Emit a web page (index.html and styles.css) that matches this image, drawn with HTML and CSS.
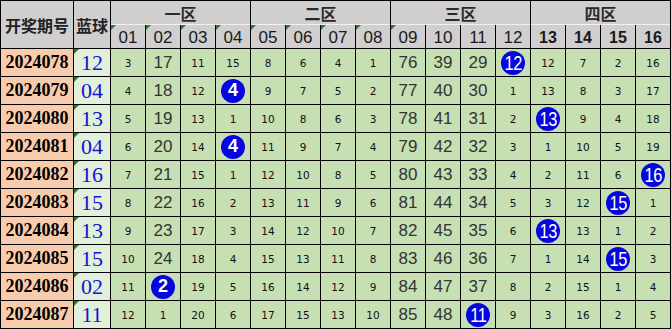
FILE: index.html
```html
<!DOCTYPE html>
<html>
<head>
<meta charset="utf-8">
<link rel="stylesheet" href="styles.css">
</head>
<body>
<div class="t">
  <div class="h hq">开奖期号</div>
  <div class="h hb">蓝球</div>
  <div class="h z">一区</div>
  <div class="h z">二区</div>
  <div class="h z">三区</div>
  <div class="h z">四区</div>
  <div class="h hn tri">01</div><div class="h hn tri">02</div><div class="h hn tri">03</div><div class="h hn tri">04</div>
  <div class="h hn tri">05</div><div class="h hn tri">06</div><div class="h hn tri">07</div><div class="h hn tri">08</div>
  <div class="h hn tri">09</div><div class="h hn">10</div><div class="h hn">11</div><div class="h hn">12</div>
  <div class="h hn hk">13</div><div class="h hn hk">14</div><div class="h hn hk">15</div><div class="h hn hk">16</div>

  <div class="p">2024078</div><div class="b tri">12</div>
  <div class="n">3</div><div class="n L">17</div><div class="n">11</div><div class="n">15</div><div class="n">8</div><div class="n">6</div><div class="n">4</div><div class="n">1</div><div class="n L">76</div><div class="n L">39</div><div class="n L">29</div><div class="n"><span class="ball"><span class="bt">12</span></span></div><div class="n">12</div><div class="n">7</div><div class="n">2</div><div class="n">16</div>

  <div class="p">2024079</div><div class="b tri">04</div>
  <div class="n">4</div><div class="n L">18</div><div class="n">12</div><div class="n"><span class="ball one">4</span></div><div class="n">9</div><div class="n">7</div><div class="n">5</div><div class="n">2</div><div class="n L">77</div><div class="n L">40</div><div class="n L">30</div><div class="n">1</div><div class="n">13</div><div class="n">8</div><div class="n">3</div><div class="n">17</div>

  <div class="p">2024080</div><div class="b tri">13</div>
  <div class="n">5</div><div class="n L">19</div><div class="n">13</div><div class="n">1</div><div class="n">10</div><div class="n">8</div><div class="n">6</div><div class="n">3</div><div class="n L">78</div><div class="n L">41</div><div class="n L">31</div><div class="n">2</div><div class="n"><span class="ball"><span class="bt">13</span></span></div><div class="n">9</div><div class="n">4</div><div class="n">18</div>

  <div class="p">2024081</div><div class="b tri">04</div>
  <div class="n">6</div><div class="n L">20</div><div class="n">14</div><div class="n"><span class="ball one">4</span></div><div class="n">11</div><div class="n">9</div><div class="n">7</div><div class="n">4</div><div class="n L">79</div><div class="n L">42</div><div class="n L">32</div><div class="n">3</div><div class="n">1</div><div class="n">10</div><div class="n">5</div><div class="n">19</div>

  <div class="p">2024082</div><div class="b tri">16</div>
  <div class="n">7</div><div class="n L">21</div><div class="n">15</div><div class="n">1</div><div class="n">12</div><div class="n">10</div><div class="n">8</div><div class="n">5</div><div class="n L">80</div><div class="n L">43</div><div class="n L">33</div><div class="n">4</div><div class="n">2</div><div class="n">11</div><div class="n">6</div><div class="n"><span class="ball"><span class="bt">16</span></span></div>

  <div class="p">2024083</div><div class="b tri">15</div>
  <div class="n">8</div><div class="n L">22</div><div class="n">16</div><div class="n">2</div><div class="n">13</div><div class="n">11</div><div class="n">9</div><div class="n">6</div><div class="n L">81</div><div class="n L">44</div><div class="n L">34</div><div class="n">5</div><div class="n">3</div><div class="n">12</div><div class="n"><span class="ball"><span class="bt">15</span></span></div><div class="n">1</div>

  <div class="p">2024084</div><div class="b tri">13</div>
  <div class="n">9</div><div class="n L">23</div><div class="n">17</div><div class="n">3</div><div class="n">14</div><div class="n">12</div><div class="n">10</div><div class="n">7</div><div class="n L">82</div><div class="n L">45</div><div class="n L">35</div><div class="n">6</div><div class="n"><span class="ball"><span class="bt">13</span></span></div><div class="n">13</div><div class="n">1</div><div class="n">2</div>

  <div class="p">2024085</div><div class="b tri">15</div>
  <div class="n">10</div><div class="n L">24</div><div class="n">18</div><div class="n">4</div><div class="n">15</div><div class="n">13</div><div class="n">11</div><div class="n">8</div><div class="n L">83</div><div class="n L">46</div><div class="n L">36</div><div class="n">7</div><div class="n">1</div><div class="n">14</div><div class="n"><span class="ball"><span class="bt">15</span></span></div><div class="n">3</div>

  <div class="p">2024086</div><div class="b tri">02</div>
  <div class="n">11</div><div class="n"><span class="ball one">2</span></div><div class="n">19</div><div class="n">5</div><div class="n">16</div><div class="n">14</div><div class="n">12</div><div class="n">9</div><div class="n L">84</div><div class="n L">47</div><div class="n L">37</div><div class="n">8</div><div class="n">2</div><div class="n">15</div><div class="n">1</div><div class="n">4</div>

  <div class="p">2024087</div><div class="b tri">11</div>
  <div class="n">12</div><div class="n">1</div><div class="n">20</div><div class="n">6</div><div class="n">17</div><div class="n">15</div><div class="n">13</div><div class="n">10</div><div class="n L">85</div><div class="n L">48</div><div class="n"><span class="ball"><span class="bt">11</span></span></div><div class="n">9</div><div class="n">3</div><div class="n">16</div><div class="n">2</div><div class="n">5</div>
</div>
</body>
</html>
```
FILE: styles.css
```css
html, body {
  margin: 0;
  padding: 0;
  background: #ffffff;
}

.t {
  display: grid;
  grid-template-columns: 72px 36px repeat(16, 34px);
  grid-template-rows: 23px 23px repeat(10, 27px);
  gap: 1px;
  padding: 1px;
  background: #000000;
  width: 669px;
}

.t > div {
  display: flex;
  align-items: center;
  justify-content: center;
  position: relative;
  overflow: visible;
}

.h {
  background: #d0cece;
  color: #1a1a1a;
}

.hq, .hb {
  grid-row: span 2;
  font-family: "Noto Sans CJK SC", "Noto Sans", sans-serif;
  font-size: 16px;
  font-weight: bold;
  color: #222;
}

.z {
  grid-column: span 4;
  font-family: "Noto Sans CJK SC", "Noto Sans", sans-serif;
  font-size: 16px;
  font-weight: bold;
  color: #2a2a2a;
  box-shadow: 0 1px 0 #f2f2f2;
}

.hn {
  font-family: "Liberation Sans", Arial, sans-serif;
  font-size: 17px;
  padding-top: 2px;
}

.hk {
  font-weight: bold;
  font-size: 16px;
}

.tri::before {
  content: "";
  position: absolute;
  left: 0;
  top: 0;
  width: 0;
  height: 0;
  border-top: 5px solid #2f7d2f;
  border-right: 5px solid transparent;
}

.p {
  background: #f8cbad;
  font-family: "Liberation Serif", "Times New Roman", serif;
  font-weight: bold;
  font-size: 18px;
  color: #000;
}

.b {
  background: #e2efda;
  font-family: "Liberation Serif", "Times New Roman", serif;
  font-size: 22px;
  color: #1414d2;
  padding-top: 1px;
}

.n {
  background: #c6e0b4;
  font-family: "DejaVu Sans", Tahoma, sans-serif;
  font-size: 10.5px;
  color: #111;
}

.L {
  font-family: "Liberation Sans", Arial, sans-serif;
  font-size: 17px;
  color: #333;
}

.ball {
  width: 24px;
  height: 24px;
  border-radius: 50%;
  background: #0606e0;
  color: #ffffff;
  display: flex;
  align-items: center;
  justify-content: center;
  font-family: "Liberation Sans", Arial, sans-serif;
  font-size: 21px;
}

.bt {
  display: inline-block;
  transform: scaleX(0.78);
  letter-spacing: -0.5px;
}

.ball.one {
  font-weight: bold;
  font-size: 18px;
}
```
